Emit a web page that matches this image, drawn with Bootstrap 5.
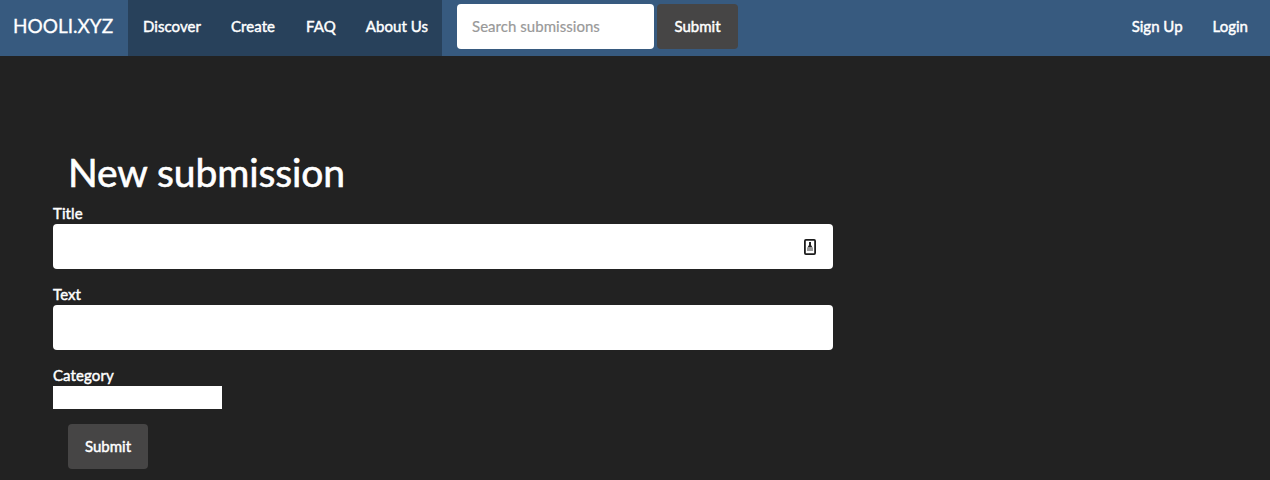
<!DOCTYPE html>
<html lang="en">
<head>
<meta charset="utf-8">
<meta name="viewport" content="width=device-width, initial-scale=1">
<title>New submission</title>
<link href="https://cdn.jsdelivr.net/npm/bootstrap@5.3.0/dist/css/bootstrap.min.css" rel="stylesheet">
<style>
body{background:#222;color:#fff;font:15px/21px Lato,sans-serif;-webkit-text-stroke:.45px;height:480px;overflow:hidden}
.topbar{background:#375a7f;height:56px}
.topbar .navbar-brand{font-size:19px;line-height:21px;color:#fff;width:128px;padding:0 0 6px 13px;-webkit-text-stroke:.3px}
.topbar .nav-item{padding-bottom:4px}
.menu{background:#28415b;height:56px;width:314px;letter-spacing:.06px}
.topbar .navbar-nav .nav-link{color:#fff;padding:0 15px;line-height:21px;white-space:nowrap}
.menu .nav-item:nth-child(3){margin-left:1px}
.form-control{height:45px;border:0;border-radius:4px;padding:10px 15px;font-size:15px;background:#fff}
.form-control::placeholder{color:#999;-webkit-text-stroke:.2px;letter-spacing:.04px}
.search{gap:3px;margin:0 0 4px 15px}
.search-box{width:197px}
.btn-dim,.btn-dim:hover{background:#464545;color:#fff;height:45px;border:0;border-radius:4px;font-size:15px;padding:0}
.search .btn{width:81px}
.account{margin-right:7px}
.submission{width:780px;margin-left:53px;padding-top:95px}
.submission h1{font-size:39px;line-height:43px;font-weight:400;margin:0 0 9px 15px;letter-spacing:-.1px;-webkit-text-stroke:.6px}
.submission label{display:block;height:21px;line-height:20px;letter-spacing:.1px}
.submission .form-control{margin-bottom:15px}
.category{width:169px;height:23px;background:#fff;border:0;display:block;padding:0}
.submission .btn{width:80px;margin:15px 0 0 15px}
.autofill{right:17px;top:15px}
</style>
</head>
<body>
<nav class="topbar navbar navbar-expand p-0 flex-nowrap">
  <a class="navbar-brand m-0" href="#">HOOLI.XYZ</a>
  <ul class="navbar-nav menu align-items-center">
    <li class="nav-item"><a class="nav-link" href="#">Discover</a></li>
    <li class="nav-item"><a class="nav-link" href="#">Create</a></li>
    <li class="nav-item"><a class="nav-link" href="#">FAQ</a></li>
    <li class="nav-item"><a class="nav-link" href="#">About Us</a></li>
  </ul>
  <form class="search d-flex">
    <input class="form-control search-box" type="text" placeholder="Search submissions">
    <button class="btn btn-dim" type="button">Submit</button>
  </form>
  <ul class="navbar-nav ms-auto account">
    <li class="nav-item"><a class="nav-link" href="#">Sign Up</a></li>
    <li class="nav-item"><a class="nav-link" href="#">Login</a></li>
  </ul>
</nav>
<main class="submission">
  <h1>New submission</h1>
  <form>
    <label for="title">Title</label>
    <div class="position-relative">
      <input class="form-control" id="title" type="text">
      <svg class="autofill position-absolute" width="12" height="16" viewBox="0 0 12 16" aria-hidden="true">
        <rect x=".9" y=".9" width="10.2" height="14.2" rx="1" fill="#fff" stroke="#1c1c1c" stroke-width="1.8"/>
        <path d="M5 3h2v3l1.5 2.5h-5L5 6z" fill="#222"/><path d="M3 8.5h6V12H3z" fill="#999"/>
      </svg>
    </div>
    <label for="text">Text</label>
    <input class="form-control" id="text" type="text">
    <label for="category">Category</label>
    <input class="category" id="category" type="text">
    <button class="btn btn-dim" type="button">Submit</button>
  </form>
</main>
<script src="https://cdn.jsdelivr.net/npm/bootstrap@5.3.0/dist/js/bootstrap.bundle.min.js"></script>
</body>
</html>
